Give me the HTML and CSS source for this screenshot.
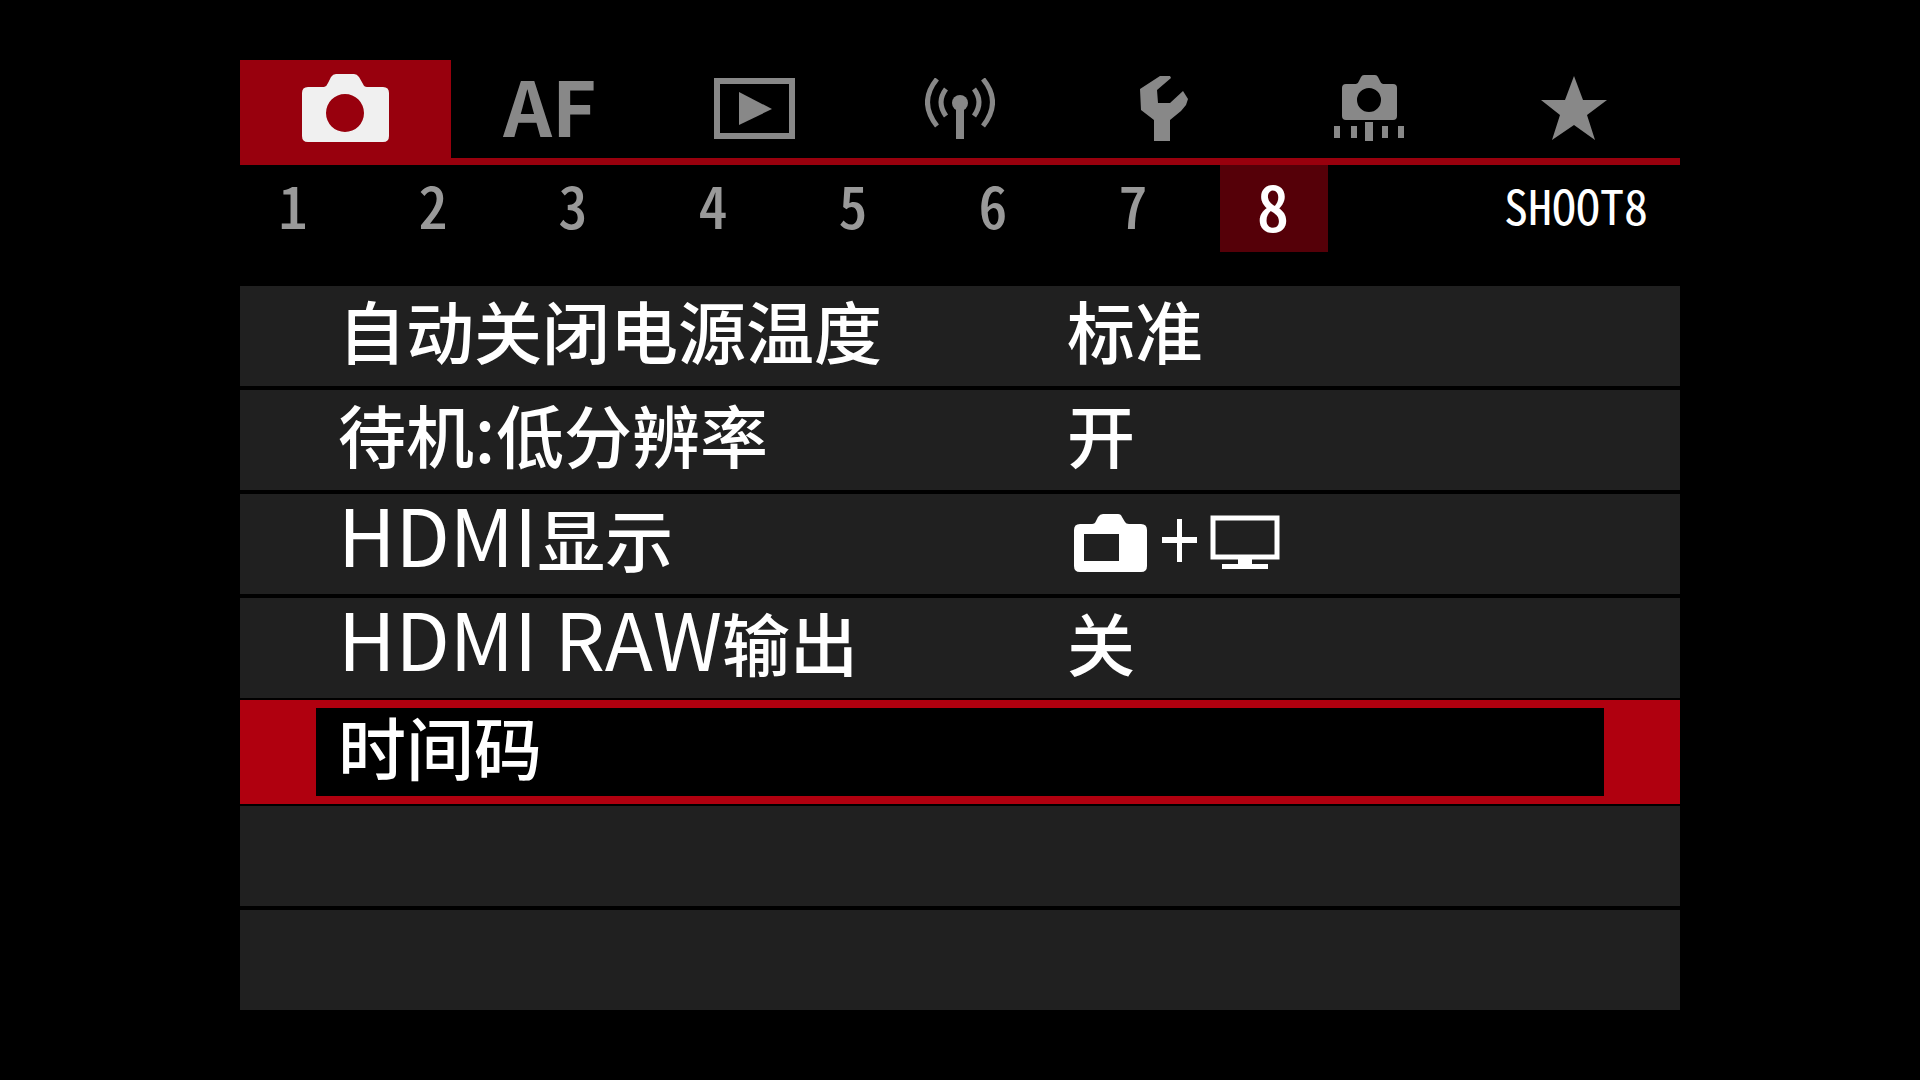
FILE: index.html
```html
<!DOCTYPE html>
<html lang="zh-CN">
<head>
  <meta charset="utf-8">
  <title>SHOOT8</title>
  <link rel="stylesheet" href="styles.css">
</head>
<body>
  <main class="menu">
    <nav class="tabs">
      <button class="tab active" aria-label="拍摄">
        <svg width="88" height="68" viewBox="0 0 88 68">
          <path fill="#f0f0f0" fill-rule="evenodd" d="M6 13H22Q25 12 26 9L29 3Q31 0 34 0H52Q55 0 57 3L61 10Q62 13 65 13H81Q87 13 87 19V62Q87 68 81 68H6Q0 68 0 62V19Q0 13 6 13ZM43 20A19 19 0 1 0 43 58A19 19 0 1 0 43 20Z"/>
        </svg>
      </button>
      <button class="tab af">AF</button>
      <button class="tab" aria-label="回放">
        <svg width="81" height="61" viewBox="0 0 81 61">
          <rect x="3" y="3" width="75" height="55" fill="none" stroke="currentColor" stroke-width="6"/>
          <path fill="currentColor" d="M25 14L58 31L25 47Z"/>
        </svg>
      </button>
      <button class="tab" aria-label="无线">
        <svg width="70" height="61" viewBox="0 0 70 61">
          <g fill="none" stroke="currentColor" stroke-width="5">
            <path d="M12 1Q-7 24 12 48M58 1Q77 24 58 48"/>
            <path d="M21 11Q11 24 21 38M49 11Q59 24 49 38"/>
          </g>
          <circle cx="35" cy="25" r="8" fill="currentColor"/>
          <path d="M31 25H39V61H31Z" fill="currentColor"/>
        </svg>
      </button>
      <button class="tab" aria-label="设置">
        <svg width="48" height="65" viewBox="0 0 48 65">
          <path fill="currentColor" d="M20 0L30 0L31 2L17 14L18 27L30 27L43 15L48 23L46 29L41 35L30 44V65H14V44L1 34L0 13Z"/>
        </svg>
      </button>
      <button class="tab" aria-label="自定义功能">
        <svg width="71" height="66" viewBox="0 0 71 66">
          <path fill="currentColor" fill-rule="evenodd" d="M12 9H22Q24 9 25 6L27 2Q28 0 30 0H41Q43 0 44 2L46 6Q47 9 49 9H59Q63 9 63 13V41Q63 45 59 45H12Q8 45 8 41V13Q8 9 12 9ZM35 13A12 12 0 1 0 35 37A12 12 0 1 0 35 13Z"/>
          <path fill="currentColor" d="M0 51H6V63H0ZM17 51H23V63H17ZM31 47H39V66H31ZM48 51H54V63H48ZM64 51H70V63H64Z"/>
        </svg>
      </button>
      <button class="tab" aria-label="我的菜单">
        <svg width="66" height="64" viewBox="0 0 66 64">
          <path fill="currentColor" d="M33 0L42 24H66L46 39L54 64L33 49L11 64L19 39L0 24H24Z"/>
        </svg>
      </button>
    </nav>

    <nav class="pages">
      <button class="page">1</button>
      <button class="page">2</button>
      <button class="page">3</button>
      <button class="page">4</button>
      <button class="page">5</button>
      <button class="page">6</button>
      <button class="page">7</button>
      <button class="page active">8</button>
      <span class="page-name">SHOOT8</span>
    </nav>

    <div class="list">
      <button class="row"><span>自动关闭电源温度</span><span>标准</span></button>
      <button class="row"><span>待机<span class="latin">:</span>低分辨率</span><span>开</span></button>
      <button class="row">
        <span><span class="latin">HDMI</span>显示</span>
        <span class="output">
          <svg width="206" height="58" viewBox="0 0 206 58" role="img" aria-label="相机+显示器">
            <path fill="currentColor" fill-rule="evenodd" d="M6 10H18Q21 10 22 7L24 3Q26 0 29 0H44Q47 0 48 3L51 8Q52 10 55 10H67Q73 10 73 16V52Q73 58 67 58H6Q0 58 0 52V16Q0 10 6 10ZM10 20V47H45V20Z"/>
            <path fill="currentColor" d="M88 23H103V5H108V23H123V29H108V48H103V29H88Z"/>
            <rect x="139" y="4" width="64" height="39" fill="none" stroke="currentColor" stroke-width="5"/>
            <path fill="currentColor" d="M164 45H178V50H194V55H148V50H164Z"/>
          </svg>
        </span>
      </button>
      <button class="row"><span><span class="latin">HDMI RAW</span>输出</span><span>关</span></button>
      <button class="row selected"><span>时间码</span></button>
      <div class="row"></div>
      <div class="row"></div>
    </div>
  </main>
</body>
</html>
```

FILE: styles.css
```css
body {
  margin: 0;
  background-color: #000;
  color: #fff;
  font-family: "Noto Sans CJK SC", sans-serif;
}

button {
  margin: 0;
  padding: 0;
  border: 0;
  background: none;
  color: inherit;
  font: inherit;
  cursor: pointer;
}

svg {
  display: block;
}

.menu {
  width: 75%;
  margin: 0 auto;
  padding: 60px 0;
}

/* main tabs */
.tabs {
  display: flex;
  height: 98px;
  border-bottom: 7px solid #98000d;
}

.tab {
  display: flex;
  flex: 1;
  align-items: center;
  justify-content: center;
  padding: 0 7px 2px 0;
  color: #888;
}

.tab.active {
  flex: 0 0 211px;
  padding: 0 0 2px;
  background-color: #98000d;
}

.af {
  padding-bottom: 10px;
  font-size: 76px;
  font-weight: 700;
  line-height: 88px;
}

/* page numbers */
.pages {
  display: flex;
  align-items: center;
  gap: 32px;
  height: 87px;
  margin-bottom: 32px;
  font-feature-settings: "hwid";
}

.page {
  width: 108px;
  height: 87px;
  padding: 0 2px 8px 0;
  color: #999;
  font-size: 58px;
  font-weight: 500;
  line-height: 79px;
}

.page.active {
  background-color: #550008;
  color: #fff;
  font-size: 64px;
}

.page-name {
  margin-left: auto;
  padding: 0 32px 8px 0;
  font-family: "Noto Sans Mono CJK SC", "Noto Sans CJK SC", monospace;
  font-size: 48px;
  line-height: 79px;
}

/* menu rows */
.row {
  display: grid;
  grid-template-columns: 729fr 613fr;
  align-items: center;
  box-sizing: border-box;
  width: 100%;
  height: 104px;
  padding: 0 0 12px 98px;
  border: solid #000;
  border-width: 2px 0;
  background-color: #202020;
  font-size: 68px;
  font-weight: 500;
  line-height: 84px;
  text-align: left;
}

.latin {
  font-size: 79px;
  font-weight: 400;
  line-height: 1px;
}

.output {
  padding: 10px 0 0 7px;
}

.row.selected {
  padding: 6px 76px;
  border-color: #b0000f;
  background-color: #b0000f;
}

.selected span {
  grid-column: 1 / -1;
  height: 88px;
  padding-left: 22px;
  background-color: #000;
  line-height: 76px;
}
```
